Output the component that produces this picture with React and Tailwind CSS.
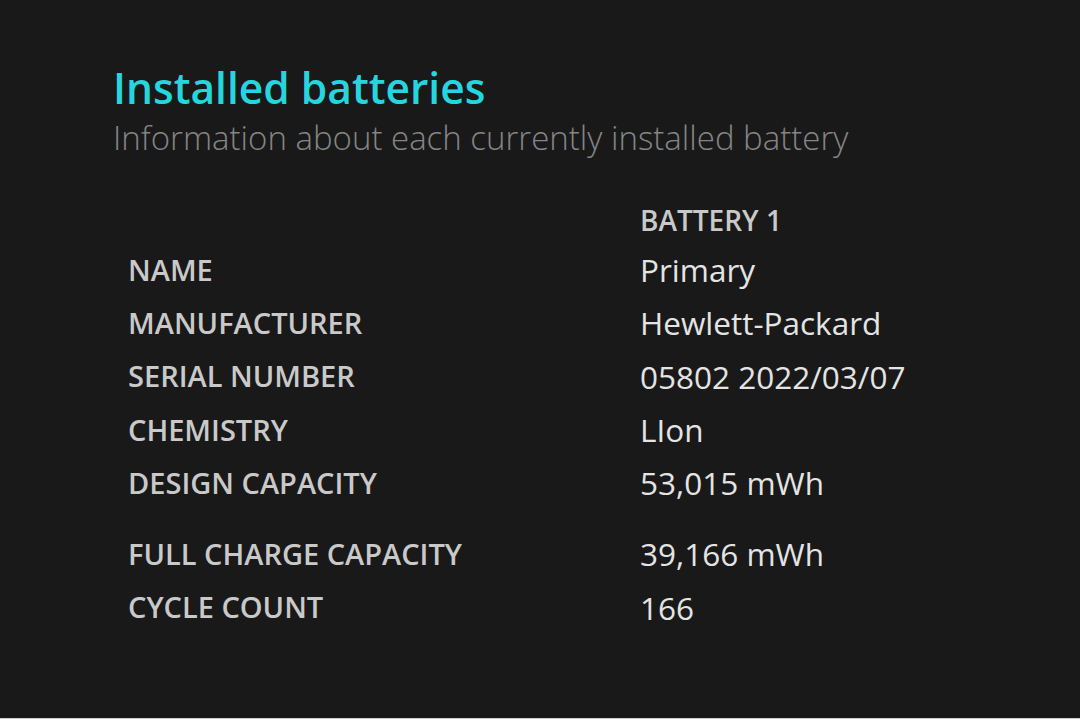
const ROWS = [
  ["NAME", "Primary"],
  ["MANUFACTURER", "Hewlett-Packard"],
  ["SERIAL NUMBER", "05802 2022/03/07"],
  ["CHEMISTRY", "LIon"],
  ["DESIGN CAPACITY", "53,015 mWh"],
];

const ROWS2 = [
  ["FULL CHARGE CAPACITY", "39,166 mWh"],
  ["CYCLE COUNT", "166"],
];

function Row({ label, value }) {
  return (
    <div className="flex items-center h-[53.25px]">
      <div className="w-[527px] pl-[15px] text-[29px] font-semibold text-[#c9c9c9]">
        {label}
      </div>
      <div className="text-[31.5px] text-[#e4e4e4]">{value}</div>
    </div>
  );
}

export default function App() {
  return (
    <div
      className="w-[1080px] h-[719px] bg-[#191919] border-b border-[#cfcfcf] overflow-hidden"
      style={{ fontFamily: '"Open Sans", "Noto Sans", sans-serif' }}
    >
      <div className="pl-[113px] pt-[63px]">
        <h1 className="text-[42.5px] font-semibold text-[#26d6de] leading-[50px]">
          Installed batteries
        </h1>
        <p className="text-[33px] font-light text-[#858585] leading-[40px] mt-[5px]">
          Information about each currently installed battery
        </p>

        <div className="mt-[38px]">
          <div className="flex items-center h-[47px]">
            <div className="w-[527px]" />
            <div className="text-[28px] font-semibold text-[#c9c9c9]">BATTERY 1</div>
          </div>
          {ROWS.map(([l, v]) => (
            <Row key={l} label={l} value={v} />
          ))}
          <div className="h-[18px]" />
          {ROWS2.map(([l, v]) => (
            <Row key={l} label={l} value={v} />
          ))}
        </div>
      </div>
    </div>
  );
}
